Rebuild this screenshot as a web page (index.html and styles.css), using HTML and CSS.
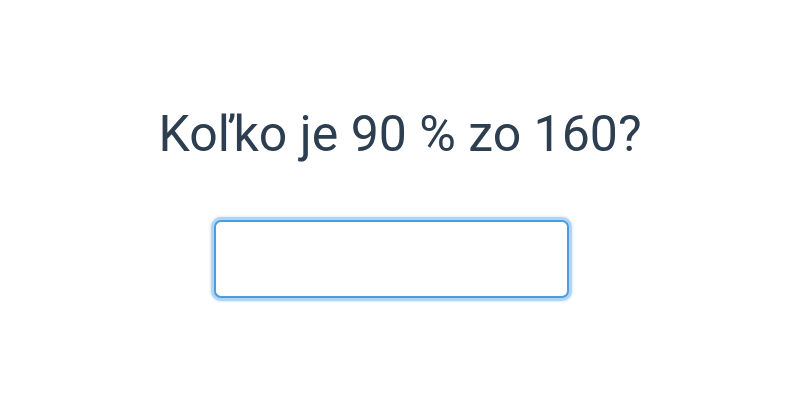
FILE: index.html
```html
<!DOCTYPE html>
<html lang="sk">
<head>
    <meta charset="utf-8">
    <link rel="stylesheet" href="styles.css">
</head>
<body>
    <div class="quiz">
        <h1 class="question">Koľko je 90 % zo 160?</h1>
        <input type="text" class="answer" autofocus>
    </div>
</body>
</html>
```

FILE: styles.css
```css
/* General Styles */
* {
    margin: 0;
    padding: 0;
    box-sizing: border-box;
    font-family: Roboto, "Noto Sans", sans-serif;
}

body {
    background: #fff;
    height: 100vh;
}

/* Question block */
.quiz {
    display: flex;
    flex-direction: column;
    align-items: center;
    padding-top: 104px;
}

.question {
    font-size: 50px;
    font-weight: 400;
    color: #2c3e50;
    line-height: 60px;
}

/* Answer input */
.answer {
    margin-top: 56px;
    margin-right: 17px;
    width: 355px;
    height: 78px;
    border: 2px solid #4a9de0;
    border-radius: 7px;
    box-shadow: 0 0 0 3px rgba(74, 157, 224, 0.3), 0 0 2px 4px rgba(74, 157, 224, 0.18);
    outline: none;
    font-size: 32px;
    text-align: center;
    color: #2c3e50;
}
```
